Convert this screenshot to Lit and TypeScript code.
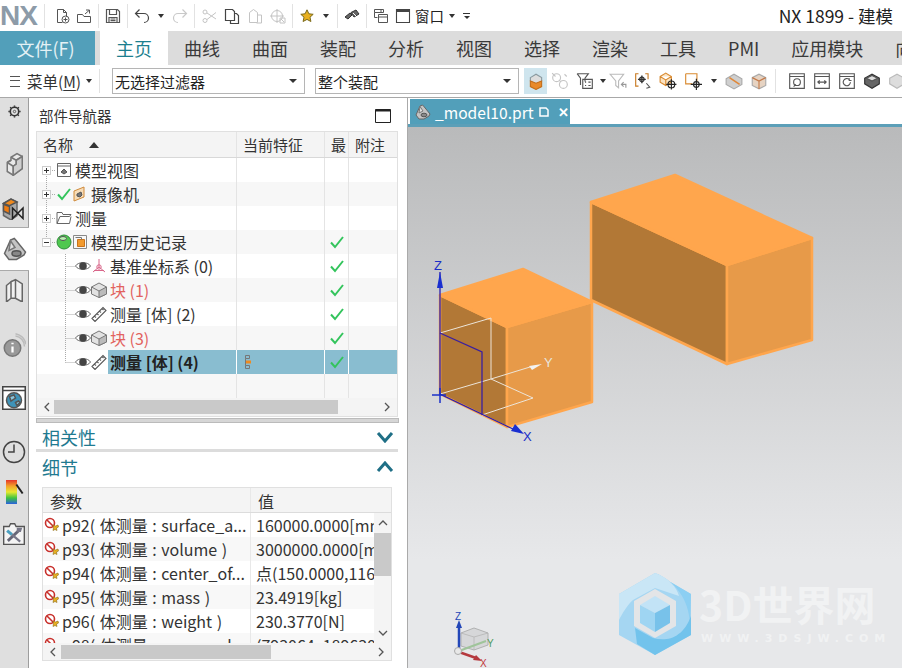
import { LitElement, html, css, svg } from "lit";
import { customElement } from "lit/decorators.js";

// small icon helper, everything is drawn on a 16x16 box
const ic = (body: unknown, cls = "ic") =>
  html`<svg class=${cls} viewBox="0 0 16 16" fill="none" stroke="#555" stroke-width="1">${body}</svg>`;

const icons = {
  newFile: svg`<path d="M3.500 1.500h6l3 3v4M3.500 1.500v13h5"/><path d="M9.500 1.500v3h3"/><circle cx="11.500" cy="11.500" r="3.500"/><path d="M9.500 11.500h4M11.500 9.500v4"/>`,
  open: svg`<path d="M1.500 6.500h5l1.500 2h6.500v6h-13zM9 6l4-3.500M10 2h3.500v3.500"/>`,
  save: svg`<path stroke-width="1.200" d="M1.500 1.500h11l2 2v11h-13zM4.500 1.500v5h7v-5M4 14.500v-5h8v5M5.500 11h5M5.500 12.700h5"/>`,
  undo: svg`<path stroke="#444" stroke-width="1.200" d="M1.500 5.500h8.500a4.500 4.500 0 0 1 0 9M5.500 1.500l-4 4 4 4"/>`,
  redo: svg`<path stroke="#c9c9c9" stroke-width="1.200" d="M14.500 5.500H6a4.500 4.500 0 0 0 0 9M10.500 1.500l4 4-4 4"/>`,
  cut: svg`<g stroke="#c4c4c4"><circle cx="4" cy="12.500" r="2"/><circle cx="4" cy="4" r="2"/><path d="M6 5l9 6M6 11.500l9-7"/></g>`,
  copy: svg`<path stroke="#444" stroke-width="1.200" d="M1.500 1.500h7l2 2v9h-9zM10.500 5.500h2l2 2v8h-8v-3"/>`,
  paste: svg`<g stroke="#c4c4c4"><path d="M2.500 4.500l4-3 4 3v10h-8zM10.500 7h4v8h-5"/></g>`,
  target: svg`<g stroke="#c4c4c4"><circle cx="7" cy="8" r="5.500"/><path d="M0 8h14M7 1v14M10 10h5v5h-5zM11 11l3 3"/></g>`,
  star: svg`<path fill="#e8b020" stroke="#7a6a1c" d="M8 1.800l1.900 4 4.300.5-3.200 2.900.9 4.300L8 11.400l-3.900 2.100.9-4.300-3.200-2.900 4.300-.5z"/>`,
  tool: svg`<path fill="#666" stroke="#333" d="M1 9l5-4 2 2-4 4zM7 4.500l5-2.500 3 4-5 3z"/><path stroke="#fff" d="M9 5l3 3"/>`,
  layers: svg`<path d="M1.500 1.500h9v3h-9zM1.500 4.500v5h3M5.500 6.500h9v8h-9zM5.500 9h9M7 3h2"/>`,
  win: svg`<path stroke="#444" stroke-width="1.100" d="M1.500 1.500h13v13h-13z"/><path stroke="#444" stroke-width="2" d="M1.500 3h13"/>`,
  orangeCube: svg`<path fill="#ddd" stroke="#8a9aa0" d="M3 5l5-3 5 3v3l-5 3-5-3z"/><path fill="#e98a2a" stroke="#c46f1b" d="M3 8l5 2 5-2v5l-5 2.500-5-2.500z"/>`,
  chain: svg`<g stroke="#c4c4c4"><circle cx="5" cy="5" r="3.500"/><circle cx="11" cy="11" r="3.500"/><path d="M7 7l2 2M1 1l3 3M12 2l2 2"/></g>`,
  filterDoc: svg`<path stroke="#555" d="M1 1.500h10l-3 4v3M1 1.500l3 4v6M6 6.500h8.500v8H6zM8 9h1M11 9h2M8 12h1M11 12h2"/>`,
  filterBack: svg`<g stroke="#bbb"><path d="M1 2h12L8.500 8v6L6 12V8z"/><path stroke="#999" d="M11 11h4v3M13 9l-2 2 2 2"/></g>`,
  bracket: svg`<path stroke="#c87a22" d="M4 1.500H1.500v11H4M10 1.500h2.500v5"/><path stroke="#333" stroke-width="1.200" d="M7 3v7M3.500 6.500h7"/><circle cx="7" cy="6.500" r="2" stroke="#333"/><path stroke="#555" d="M11 10l3 3.500-3 1"/>`,
  boxTarget: svg`<path stroke="#d98a30" fill="#fbe3c2" d="M1 4l5-3 5 3v5l-5 3-5-3zM1 4l5 3 5-3M6 7v5"/><circle cx="11" cy="11" r="3" stroke="#222"/><path stroke="#222" d="M6.500 11h9M11 6.500v9"/>`,
  rectTarget: svg`<path stroke="#d98a30" d="M1.500 1.500h10v7M1.500 1.500v9h6"/><circle cx="11" cy="11" r="2.500" stroke="#222"/><path stroke="#222" d="M6 11h10M11 6v10"/>`,
  cutBox: svg`<path fill="#cfcfcf" stroke="#aaa" d="M1 6l7-4 7 4v5l-7 4-7-4z"/><path stroke="#e0883a" stroke-width="1.500" d="M4 5l9 6"/>`,
  halfBox: svg`<path fill="#e6d3c2" stroke="#aaa" d="M2 5l6-3 6 3v7l-6 3-6-3z"/><path stroke="#c47a4a" d="M2 5l6 3 6-3M8 8v7"/>`,
  view1: svg`<path d="M1.500 1.500h13v13h-13zM1.500 4h13"/><circle cx="8" cy="9" r="3" stroke="#555"/><path d="M5 13l2-2"/>`,
  view2: svg`<path d="M1.500 1.500h13v13h-13zM1.500 4h13M4 9h8M4 9l2-1.500M4 9l2 1.500M12 9l-2-1.500M12 9l-2 1.500"/>`,
  view3: svg`<path d="M1.500 1.500h13v13h-13zM1.500 4h13M11 9a3.200 3.200 0 1 1-1-2.300M10 5.500v2h2"/>`,
  solid: svg`<path fill="#666" stroke="#333" d="M1.500 5.500L8 2l6.500 3.500v5L8 14.500l-6.500-4z"/><path fill="#ddd" d="M3 5.500L8 3l5 2.500L8 8z"/>`,
  ghost: svg`<path fill="#ddd" stroke="#bbb" d="M1.500 5.500L8 2l6.500 3.500v5L8 14.500l-6.500-4z"/>`,
  gear: svg`<circle cx="8" cy="8" r="4.500" stroke="#333" stroke-width="1.700"/><circle cx="8" cy="8" r="1.300" stroke="#555"/><path stroke="#333" stroke-width="1.600" d="M8 1.500v1.500M8 13v1.500M1.500 8H3M13 8h1.500M3.400 3.400l1 1M11.600 11.600l1 1M3.400 12.600l1-1M11.600 4.400l1-1"/>`,
  cube: svg`<path fill="#e9e9e9" stroke="#777" d="M3.500 7v6l4 2.500 6-4.500V3L10 1 6 3.500v2z"/><path stroke="#777" d="M3.500 7l4 2.500v6M7.500 9.500l2-1.500V5.500L13.500 3M6 3.500l3.500 2M6 5.500L3.500 7"/><path fill="#cfcfcf" stroke="#777" d="M7.500 9.500l2-1.500V5.500l4-2.500v8l-6 4.500z"/>`,
  assembly: svg`<path fill="#aaa" stroke="#666" d="M1 5l5-3 4 2v9l-4 3-5-3z"/><path fill="#f08a1e" d="M1 5l5-3 4 2-5 2.500z"/><path fill="#ee7a10" d="M1 5.500l4 1.500v5l-4-2z"/><path stroke="#222" d="M7 8l7 7V8l-7 7z"/>`,
  part: svg`<path fill="#c4c4c4" stroke="#666" d="M1 11l4-9 2.500-1 1 1L15 10l-1 2-5 3H4z"/><path fill="#e0e0e0" stroke="#777" d="M5 2.500L4 9l4-2z"/><ellipse cx="9" cy="11" rx="3" ry="1.800" fill="#888" stroke="#555"/>`,
  books: svg`<path fill="#f0f0f0" stroke="#666" d="M3 5l3-2.500v11L3 16zM6 2.500L9 1l4.500 3v12L9 13.500H6zM9 1v12.500"/>`,
  info: svg`<circle cx="7" cy="10" r="5.500" fill="#999" stroke="#777"/><path stroke="#fff" stroke-width="1.500" d="M7 9v4M7 6.500v1"/><path stroke="#bbb" d="M9 2a7 7 0 0 1 6 7M9 .5a9 9 0 0 1 7 7"/>`,
  browser: svg`<path fill="#fff" stroke="#444" d="M.5.500h15v15H.5z"/><path stroke="#444" d="M.5 3h15"/><circle cx="8" cy="9.500" r="5" fill="#3f93b8"/><path fill="#8cc6dc" d="M5 7l3-1 1 2-3 2zM9 11l2-1 1 1-2 2z"/>`,
  clock: svg`<circle cx="8" cy="8" r="7" stroke="#444"/><path stroke="#444" d="M8 3v5H4"/>`,
  tools: svg`<path fill="#f4f4f4" stroke="#555" d="M.5 2.500h4l1-2h3l1 2h6v13H.5z"/><path stroke="#667" stroke-width="2" d="M3.500 13L12 5"/><path stroke="#4a9fc0" stroke-width="2.200" d="M3 5.500l3.500 3"/><path stroke="#778" stroke-width="1.600" d="M6.500 8.500l6 5"/><path fill="#778" stroke="none" d="M10 3.500h4l-1 3h-3z"/>`,
  maximize: svg`<path stroke="#222" d="M.5 1.500h15v13H.5z"/><path stroke="#222" stroke-width="2" d="M.5 2.500h15"/>`,
  modelView: svg`<path stroke="#666" d="M1.500 1.500h13v13h-13zM1.500 4h13"/><path fill="#777" d="M5 10l3-3 3 3-3 2z"/>`,
  folder: svg`<path stroke="#666" d="M1 13.500v-11h5l1 2h8l-1.500 2H4L1 13.500h12.500L15 6.500"/>`,
  check: svg`<path stroke="#33c45c" stroke-width="2" d="M2 8.500l4 4.500 8-10"/>`,
  camera: svg`<path fill="#f7dcb7" stroke="#d08a3a" d="M2 5l10-4v10L2 15z"/><path fill="#777" d="M5 8l4-2 1 3-2 2-3-1z"/>`,
  ball: svg`<circle cx="8" cy="8" r="7" fill="#4fc84f" stroke="#2f8f3a"/><ellipse cx="7" cy="4.500" rx="3.500" ry="2" fill="#b9f0b0"/>`,
  hist: svg`<path stroke="#888" d="M1.500 1.500h13v13h-13z"/><path fill="#f29a2e" stroke="#c9731b" d="M5.500 5.500h7v7h-7z"/><path stroke="#777" d="M3.500 3.500h6v2"/>`,
  eye: svg`<path fill="#fff" stroke="#666" d="M.5 8C3 3.500 13 3.500 15.500 8 13 12.500 3 12.500.5 8z"/><circle cx="8" cy="8" r="3.800" fill="#444" stroke="none"/>`,
  csys: svg`<g stroke="#d9668a"><path d="M8 1v8M8 9l-6 5M8 9l6 5M3 12.500h10"/><circle cx="8" cy="9" r="2.200"/></g>`,
  block: svg`<path fill="#e2e2e2" stroke="#777" d="M.5 5L8 1l7.500 4v7L8 15.500.5 12z"/><path fill="#bbb" stroke="#777" d="M8 9l7.500-4v7L8 15.500z"/><path stroke="#777" d="M.5 5L8 9"/>`,
  ruler: svg`<path stroke="#555" stroke-width="1.100" d="M1 12.500L12 1.500l3 3-11 11zM3.500 10l1.500 1.500M6 7.500L7.500 9M8.500 5L10 6.500M11 2.500l1.500 1.500"/>`,
  timeline: svg`<path stroke="#777" d="M3.500 1.500h4v3h-4zM3.500 11.500h4v3h-4zM3.500 4.500v7"/><path fill="#ee8a20" stroke="none" d="M4 6.500h5v3H4z"/>`,
  param: svg`<circle cx="6" cy="6" r="4.500" fill="#fff" stroke="#c8302c" stroke-width="1.600"/><path stroke="#c8302c" stroke-width="1.600" d="M3 3l6 6"/><path fill="#e8b020" stroke="#8a6a18" stroke-width=".6" d="M9 8l2.500 1 2.500-1 .5 2-2 1 .5 2.500-2-1-2 1 .5-3z"/>`,
};

const tree = [
  { kind: "root", exp: "+", icons: [icons.modelView], text: "模型视图" },
  { kind: "root", exp: "+", icons: [icons.check, icons.camera], text: "摄像机" },
  { kind: "root", exp: "+", icons: [icons.folder], text: "测量" },
  { kind: "root", exp: "-", icons: [icons.ball, icons.hist], text: "模型历史记录", ok: true, end: true },
  { kind: "feat", icons: [icons.eye, icons.csys], text: "基准坐标系 (0)", ok: true },
  { kind: "feat", icons: [icons.eye, icons.block], text: "块 (1)", ok: true, red: true },
  { kind: "feat", icons: [icons.eye, icons.ruler], text: "测量 [体] (2)", ok: true },
  { kind: "feat", icons: [icons.eye, icons.block], text: "块 (3)", ok: true, red: true },
  { kind: "feat", icons: [icons.eye, icons.ruler], text: "测量 [体] (4)", ok: true, sel: true, end: true },
];

const params = [
  ["p92( 体测量 : surface_a...", "160000.0000[mm²]"],
  ["p93( 体测量 : volume )", "3000000.0000[mm³]"],
  ["p94( 体测量 : center_of...", "点(150.0000,116.6667,50.0000)"],
  ["p95( 体测量 : mass )", "23.4919[kg]"],
  ["p96( 体测量 : weight )", "230.3770[N]"],
  ["p98( 体测量 : gross_sol...", "(793064, 189630)"],
];

const tabs = ["曲线", "曲面", "装配", "分析", "视图", "选择", "渲染", "工具", "PMI", "应用模块", "向"];

const sb = (dir: string) => {
  const d: Record<string, string> = {
    l: "M9 3L5 7l4 4",
    r: "M5 3l4 4-4 4",
    u: "M3 9l4-4 4 4",
    d: "M3 5l4 4 4-4",
  };
  return html`<svg class="sbarrow" viewBox="0 0 14 14" fill="none" stroke="#555" stroke-width="1.300"><path d=${d[dir]} /></svg>`;
};

@customElement("app-root")
export class AppRoot extends LitElement {
  static styles = css`
    :host {
      display: block;
      width: 902px;
      height: 668px;
      overflow: hidden;
      background: #fff;
      color: #333;
      font-family: "Noto Sans CJK SC", "Noto Sans", sans-serif;
    }
    .ic { width: 16px; height: 16px; flex: none; margin: 0 3px; }
    .ic.g1 { margin-left: 4px; }
    .title { height: 31px; display: flex; align-items: center; }
    .logo { font: bold 28px "Liberation Sans", sans-serif; color: #8d9ba8; width: 41px; letter-spacing: -1px; }
    .sep { width: 1px; height: 24px; background: #e2e2e2; margin: 0 3px; flex: none; }
    .sep.first { margin-right: 6px; }
    .dd { width: 0; height: 0; border: 3px solid transparent; border-top: 4px solid #333; border-bottom: 0; margin: 0 5px; flex: none; }
    .wintext { font-size: 14.500px; color: #222; margin-left: 1px; }
    .more { width: 7px; margin-left: 3px; border-top: 1px solid #333; flex: none; padding-top: 2px; box-sizing: border-box; height: 6px; display: flex; justify-content: center; }
    .more::after { content: ""; border: 3px solid transparent; border-top: 3px solid #333; border-bottom: 0; }
    .appname { margin-left: auto; margin-right: 9px; font-size: 17.500px; color: #222; }

    .tabs { height: 34px; background: #dcdcdc; display: flex; font-size: 18px; line-height: 34px; overflow: hidden; }
    .file { width: 91px; padding-right: 4px; background: #529fba; color: #e4f1f5; text-align: center; flex: none; margin-right: 5px; }
    .tab { padding: 0 16px; flex: none; color: #3a3a3a; }
    .tab.on { background: #fff; color: #1c7f8f; }

    .filters { height: 33px; display: flex; align-items: center; font-size: 15.500px; color: #333; border-bottom: 1px solid #a8a8a8; box-sizing: border-box; overflow: hidden; }
    .ham { width: 10px; height: 9px; margin: 0 7px 0 10px; border-top: 1px solid #555; border-bottom: 1px solid #555; position: relative; flex: none; }
    .ham::after { content: ""; display: block; height: 1px; background: #555; margin-top: 3.500px; }
    .menu { white-space: nowrap; flex: none; }
    .menu u { text-underline-offset: 2px; }
    .filters .dd.m { margin: 0 0 0 5px; }
    .sep.m { margin: 0 0 0 7px; }
    .select { height: 26px; box-sizing: border-box; border: 1px solid #b5b5b5; display: flex; align-items: center; padding: 0 2px; flex: none; justify-content: space-between; background: #fff; font-size: 15px; color: #222; }
    .select::after { content: ""; border: 4px solid transparent; border-top: 4px solid #333; border-bottom: 0; margin-right: 5px; }
    .s1 { width: 193px; margin-left: 12px; }
    .s2 { width: 204px; margin-left: 10px; margin-right: 5px; }
    .active { width: 23px; height: 26px; background: #cfe5ee; display: flex; align-items: center; justify-content: center; flex: none; }
    .filters .ic { width: 18px; height: 18px; margin: 0 3.500px; }
    .filters .active .ic { margin: 0; }
    .filters .ic.push { margin-left: 0; }
    .filters .dd { margin: 0 3px; }
    .filters .dd.w { margin: 0 5px; }
    .filters .sep.v { margin-right: 9px; }

    .main { display: flex; height: 570px; }
    .rail { width: 29px; flex: none; display: flex; flex-direction: column; align-items: center; background: #dfdfdf; border-right: 1px solid #9d9d9d; box-sizing: border-box; position: relative; }
    .rail .r { width: 24px; height: 24px; margin: 0; flex: none; }
    .rail .gap { background: #fff; align-self: stretch; margin-right: -1px; height: 44px; display: flex; align-items: center; justify-content: center; border-top: 1px solid #aaa; border-bottom: 1px solid #aaa; box-sizing: border-box; margin-top: 7px; }
    .rail .gear { width: 15px; height: 15px; margin: 6px 0 33px; flex: none; }
    .rail .cube { width: 24px; height: 24px; margin-bottom: 20px; flex: none; }
    .rail .m1 { margin-top: 7px; }
    .rail .m2 { margin-top: 31px; }
    .rail .m3 { margin-top: 29px; }
    .rail .m4 { margin-top: 30px; }
    .rail .m6 { margin-top: 19px; width: 22px; height: 22px; }
    .rainbow { width: 11px; height: 24px; margin: 16px 6px 0 0; background: linear-gradient(#e5352a, #f3a12a, #e8e830, #3fc43f, #2a60e0); position: relative; flex: none; }
    .rainbow::after { content: ""; position: absolute; left: 8px; top: 8px; width: 11px; height: 2px; background: #222; transform: rotate(55deg); }

    .panel { width: 379px; flex: none; border-right: 1px solid #aaa; box-sizing: border-box; padding-left: 7px; display: flex; flex-direction: column; }
    .phead { height: 33px; display: flex; align-items: center; justify-content: space-between; font-size: 14.500px; padding: 2px 16px 0 3px; box-sizing: border-box; color: #333; flex: none; }
    .phead .ic { margin: 0; }

    .table { width: 362px; border: 1px solid #e0e0e0; box-sizing: border-box; flex: none; overflow: hidden; position: relative; }
    .row { display: grid; grid-template-columns: 200px 88px 24px 49px; height: 24px; font-size: 16px; line-height: 24px; white-space: nowrap; }
    .row > div { border-right: 1px solid #e4e4e4; box-sizing: border-box; display: flex; align-items: center; overflow: hidden; }
    .row:nth-child(odd) { background: #f7f7f7; }
    .row.hd { height: 26px; background: #f4f4f4; border-bottom: 1px solid #d8d8d8; box-sizing: border-box; font-size: 15px; color: #333; }
    .row.hd > div { padding-left: 6px; }
    .row .c { justify-content: center; }
    .row .c .ic { margin: 0; }
    .row .ic { margin: 0; }
    .guide { width: 19px; height: 24px; flex: none; }
    .guide.f { width: 38px; }
    .red { color: #e2625e; }
    .label { padding-left: 2px; }
    .spacer { width: 5px; flex: none; }
    .row.sel { background: #fff; font-weight: 700; color: #222; }
    .row.sel > div { background: #89bdd0; border-right-color: #fff; }
    .row.sel > .namecell { background: none; }
    .namecell .hl { background: #89bdd0; height: 24px; flex: 1; display: flex; align-items: center; margin-left: 1px; }
    .namecell .hl.plain { background: none; }

    .hbar { height: 18px; display: flex; align-items: center; background: #f4f4f4; flex: none; }
    .hbar .sbarrow:last-child { margin-left: auto; }
    .thumb { background: #c9c9c9; height: 14px; }
    .thumb.t1 { width: 284px; margin-left: -3px; }
    .thumb.t2 { width: 210px; margin-left: -2px; }
    .sbarrow { width: 14px; height: 14px; flex: none; margin: 0 3px; }

    .divider { height: 5px; background: #d6d6d6; width: 363px; margin-top: 1px; flex: none; border: 1px solid #bbb; box-sizing: border-box; }
    .sect { height: 29px; width: 362px; display: flex; align-items: center; justify-content: space-between; color: #1f7a90; font-size: 18px; padding: 1px 4px 0 6px; box-sizing: border-box; flex: none; border-bottom: 3px solid #dcdcdc; }
    .sect.open { border: 0; height: 28px; }
    .sect svg { width: 18px; height: 12px; }

    .ptable { width: 350px; margin: 7px 0 0 6px; border: 1px solid #e0e0e0; box-sizing: border-box; height: 174px; flex: none; position: relative; overflow: hidden; }
    .prow { display: grid; grid-template-columns: 208px 141px; height: 24px; font-size: 16px; line-height: 24px; white-space: nowrap; }
    .prow > div { overflow: hidden; border-right: 1px solid #e8e8e8; box-sizing: border-box; display: flex; align-items: center; padding-left: 5px; }
    .prow .name { word-spacing: 1px; }
    .prow .ic { margin: 0 2px 0 -4px; }
    .prow:nth-child(even) { background: #f8f8f8; }
    .prow.hd { height: 25px; background: #f4f4f4; border-bottom: 1px solid #dcdcdc; box-sizing: border-box; }
    .prow.hd > div { padding: 2px 0 0 7px; }
    .prows { height: 130px; overflow: hidden; }
    .pbody { display: flex; }
    .pcells { flex: 1; min-width: 0; overflow: hidden; }
    .prows .prow > div:last-child { border-right: 0; }
    .vbar { width: 17px; background: #f4f4f4; flex: none; display: flex; flex-direction: column; align-items: center; height: 130px; }
    .vbar .sbarrow { margin: 3px 0; }
    .vthumb { width: 17px; height: 43px; background: #c9c9c9; margin-bottom: auto; }
    .ptable .hbar { height: 17px; }

    .view { flex: 1; display: flex; flex-direction: column; min-width: 0; }
    .vtabs { height: 26px; flex: none; display: flex; align-items: flex-end; padding-left: 2px; box-sizing: border-box; }
    .vtab { width: 160px; height: 25px; background: #529fba; color: #fff; display: flex; align-items: center; font-size: 15.600px; box-sizing: border-box; padding-left: 5px; }
    .vtab .ic { margin: 0 4px 0 0; }
    .vtab .pin { width: 10px; height: 10px; margin: 0 0 0 5px; }
    .vtab .x { margin-left: 9px; font-weight: 700; font-size: 13px; }
    .canvas { flex: 1; border-top: 3px solid #5c9fb8; background: linear-gradient(#b9babb, #e7e8ea 80%); min-height: 0; }
    .canvas svg { display: block; }
  `;

  renderRow(r: (typeof tree)[number]) {
    const isRoot = r.kind === "root";
    const guide = isRoot
      ? svg`<svg class="guide" viewBox="0 0 19 24" fill="none">
          <path stroke="#aaa" stroke-dasharray="1 1" d="M9.500 ${tree[0] === r ? 12 : 0}V${r.end ? 8 : 24}M13 12.500h6"/>
          <rect x="5.500" y="8.500" width="8" height="8" fill="#fff" stroke="#ccc"/>
          <path stroke="#333" d="M7 12.500h5${r.exp === "+" ? "M9.500 10v5" : ""}"/></svg>`
      : svg`<svg class="guide f" viewBox="0 0 38 24" fill="none">
          <path stroke="#aaa" stroke-dasharray="1 1" d="M28.500 0V${r.end ? 12.500 : 24}M28.500 12.500h9"/></svg>`;
    return html`<div class="row ${r.sel ? "sel" : ""}">
      <div class="namecell">
        ${guide}
        ${r.icons.map((b) => ic(b))}
        <div class="hl ${r.sel ? "" : "plain"}">
          <span class="label ${r.red ? "red" : ""}">${r.text}</span>
        </div>
      </div>
      <div>${r.sel ? html`<span class="spacer"></span>${ic(icons.timeline)}` : ""}</div>
      <div class="c">${r.ok ? ic(icons.check) : ""}</div>
      <div></div>
    </div>`;
  }

  renderCanvas() {
    const o = (x: number, y: number) => `${x - 408},${y - 127}`;
    const poly = (pts: number[][], fill: string) =>
      svg`<polygon points=${pts.map((p) => o(p[0], p[1])).join(" ")} fill=${fill} stroke="#ffa64d" stroke-width="2.500" stroke-linejoin="round"/>`;
    const line = (pts: number[][], color: string, w = 1) =>
      svg`<polyline points=${pts.map((p) => o(p[0], p[1])).join(" ")} fill="none" stroke=${color} stroke-width=${w}/>`;
    const tx = (x: number, y: number, s: string, color: string, size: number) =>
      svg`<text x=${x - 408} y=${y - 127} fill=${color} font-size=${size} font-family="Liberation Sans">${s}</text>`;
    const P = (pts: number[][], fill: string) =>
      svg`<polygon points=${pts.map((p) => o(p[0], p[1])).join(" ")} fill=${fill}/>`;
    return html`<svg width="494" height="541" viewBox="0 0 494 541">
      ${poly([[591, 202], [727, 265], [727, 364], [591, 300]], "#b27836")}
      ${poly([[727, 265], [812, 238], [812, 340], [727, 364]], "#e79a49")}
      ${poly([[591, 202], [675, 175], [812, 238], [727, 265]], "#ffa64d")}
      ${poly([[440, 295], [507, 327], [507, 427], [440, 394]], "#b27836")}
      ${poly([[507, 327], [592, 302], [592, 402], [507, 427]], "#e79a49")}
      ${poly([[440, 295], [523, 269], [592, 302], [507, 327]], "#ffa64d")}
      ${line([[440, 333], [491, 318], [491, 379], [440, 394]], "#ece4d8")}
      ${line([[491, 379], [533, 398], [482, 415]], "#ece4d8")}
      ${line([[491, 379], [530, 367]], "#ece4d8")}
      ${P([[529, 366], [542, 364], [532, 370]], "#f2f2f2")}
      ${tx(544, 367, "Y", "#e8e4dc", 13)}
      ${line([[440, 333], [482, 352], [482, 415]], "#3a1fa0", 1.300)}
      ${line([[440, 272], [440, 394], [515, 430]], "#2a1fb0", 1.300)}
      ${line([[432, 395], [446, 395]], "#1a2fc8", 1.500)}
      ${line([[440, 388], [440, 403]], "#1a2fc8", 1.500)}
      ${P([[440, 272], [443, 288], [437, 288]], "#1a2fd0")}
      ${P([[524, 434], [511, 431], [515, 424]], "#1a2fd0")}
      ${tx(434, 270, "Z", "#1a2fc8", 13)}
      ${tx(523, 441, "X", "#1a2fc8", 13)}

      <!-- small triad, lower left -->
      <g opacity=".7">
        ${P([[461, 633], [474, 628], [488, 633], [488, 645], [474, 650], [461, 646]], "#d0d1d2")}
        ${line([[461, 633], [474, 637], [488, 633]], "#aaa")}
        ${line([[474, 637], [474, 650]], "#aaa")}
        ${line([[461, 633], [474, 628], [488, 633], [488, 645], [474, 650], [461, 646], [461, 633]], "#9a9a9a")}
      </g>
      ${line([[459, 651], [486, 641]], "#9fc49a", 2)}
      ${line([[459, 627], [459, 648]], "#2347b8", 2.500)}
      ${P([[459, 620], [462, 628], [456, 628]], "#2347b8")}
      ${line([[459, 652], [476, 658]], "#b5393e", 2.500)}
      ${P([[482, 661], [473, 660], [476, 655]], "#b5393e")}
      <circle cx=${458 - 408} cy=${651 - 127} r="3.500" fill="#e8e8e8" stroke="#aaa"/>
      ${tx(455, 620, "Z", "#2347b8", 10)}
      ${tx(487, 647, "Y", "#4f9a5c", 10)}
      ${tx(480, 667, "X", "#c23a40", 10)}

      <!-- watermark -->
      <g transform="translate(${655 - 408} ${614 - 127})">
        <polygon points="0,-41 36,-20 36,21 0,41 -36,21 -36,-20" fill="#a5d6f2"/>
        <path d="M0-41L36-20 35 10C34-15 20-33 0-41z" fill="#8ccff3"/>
        <path d="M-36-20L0-41C14-36 22-26 24-18L0-26-22-14C-27-10-33 0-36 6z" fill="#c9e6f6"/>
        <path d="M36 21L0 41-18 30-20 14-2 24C12 28 28 24 36 2z" fill="#72c3ec"/>
        <polygon points="0,-25 21,-13 21,12 0,24 -21,12 -21,-13" fill="#e3e5e7"/>
        <polygon points="0,-18 15,-9 0,-1 -15,-9" fill="#c2e3f6"/>
        <polygon points="-15,-9 0,-1 0,18 -15,9" fill="#9fd5f2"/>
        <polygon points="15,-9 0,-1 0,18 15,9" fill="#78c2ea"/>
      </g>
      <text x=${699 - 408} y=${621 - 127} font-size="41" font-weight="700" fill="#f1f2f3" font-family="Noto Sans CJK SC">3D世界网</text>
      <text x=${701 - 408} y=${642 - 127} font-size="11" font-weight="700" fill="#f1f2f3" letter-spacing="6" font-family="DejaVu Sans">WWW.3DSJW.COM</text>
    </svg>`;
  }

  render() {
    return html`
      <div class="title">
        <span class="logo">NX</span><span class="sep first"></span>
        ${ic(icons.newFile)}${ic(icons.open)}<span class="sep"></span>
        ${ic(icons.save)}<span class="sep"></span>
        ${ic(icons.undo)}<span class="dd"></span>${ic(icons.redo)}<span class="sep"></span>
        ${ic(icons.cut)}${ic(icons.copy, "ic g1")}${ic(icons.paste, "ic g1")}${ic(icons.target, "ic g1")}<span class="sep"></span>
        ${ic(icons.star)}<span class="dd"></span><span class="sep"></span>
        ${ic(icons.tool)}<span class="sep"></span>
        ${ic(icons.layers)}${ic(icons.win)}<span class="wintext">窗口</span>
        <span class="dd"></span><span class="more"></span>
        <span class="appname">NX 1899 - 建模</span>
      </div>
      <div class="tabs">
        <div class="file">文件(F)</div>
        <div class="tab on">主页</div>
        ${tabs.map((t) => html`<div class="tab">${t}</div>`)}
      </div>
      <div class="filters">
        <span class="ham"></span>
        <span class="menu">菜单(<u>M</u>)</span>
        <span class="dd m"></span>
        <span class="sep m"></span>
        <div class="select s1">无选择过滤器</div>
        <div class="select s2">整个装配</div>
        <div class="active">${ic(icons.orangeCube)}</div>
        ${ic(icons.chain)}${ic(icons.filterDoc)}<span class="dd"></span>
        ${ic(icons.filterBack, "ic push")}${ic(icons.bracket)}${ic(icons.boxTarget)}${ic(icons.rectTarget)}
        <span class="dd w"></span>
        ${ic(icons.cutBox)}${ic(icons.halfBox)}<span class="sep v"></span>
        ${ic(icons.view1)}${ic(icons.view2)}${ic(icons.view3)}${ic(icons.solid)}${ic(icons.ghost)}
      </div>
      <div class="main">
        <div class="rail">
          ${ic(icons.gear, "gear")}
          ${ic(icons.cube, "cube")}
          ${ic(icons.assembly, "r")}
          <div class="gap">${ic(icons.part, "r")}</div>
          ${ic(icons.books, "r m1")}
          ${ic(icons.info, "r m2")}
          ${ic(icons.browser, "r m3")}
          ${ic(icons.clock, "r m4")}
          <div class="rainbow"></div>
          ${ic(icons.tools, "r m6")}
        </div>
        <div class="panel">
          <div class="phead"><span>部件导航器</span>${ic(icons.maximize)}</div>
          <div class="table">
            <div class="row hd">
              <div>名称<svg width="10" height="6" style="margin-left:16px"><path d="M0 6L5 0l5 6z" fill="#333"/></svg></div>
              <div>当前特征</div><div>最</div><div>附注</div>
            </div>
            ${tree.map((r) => this.renderRow(r))}
            <div class="row"><div></div><div></div><div></div><div></div></div>
            <div class="hbar">${sb("l")}<div class="thumb t1"></div>${sb("r")}</div>
          </div>
          <div class="divider"></div>
          <div class="sect">
            <span>相关性</span>
            <svg viewBox="0 0 18 12" fill="none" stroke="#1f6f86" stroke-width="3"><path d="M2 2l7 8 7-8"/></svg>
          </div>
          <div class="sect open">
            <span>细节</span>
            <svg viewBox="0 0 18 12" fill="none" stroke="#1f6f86" stroke-width="3"><path d="M2 10l7-8 7 8"/></svg>
          </div>
          <div class="ptable">
            <div class="prow hd"><div>参数</div><div>值</div></div>
            <div class="pbody">
              <div class="pcells">
                <div class="prows">
                  ${params.map(
                    (p) => html`<div class="prow">
                      <div class="name">${ic(icons.param)}${p[0]}</div>
                      <div>${p[1]}</div>
                    </div>`
                  )}
                </div>
              </div>
              <div class="vbar">${sb("u")}<div class="vthumb"></div>${sb("d")}</div>
            </div>
            <div class="hbar">${sb("l")}<div class="thumb t2"></div>${sb("r")}</div>
          </div>
        </div>
        <div class="view">
          <div class="vtabs">
            <div class="vtab">
              ${ic(icons.part)}<span>_model10.prt</span>
              <svg class="pin" viewBox="0 0 10 10" fill="none" stroke="#fff" stroke-width="1.500"><path d="M1 1h6l2 2v6H1z"/></svg>
              <span class="x">✕</span>
            </div>
          </div>
          <div class="canvas">${this.renderCanvas()}</div>
        </div>
      </div>
    `;
  }
}
